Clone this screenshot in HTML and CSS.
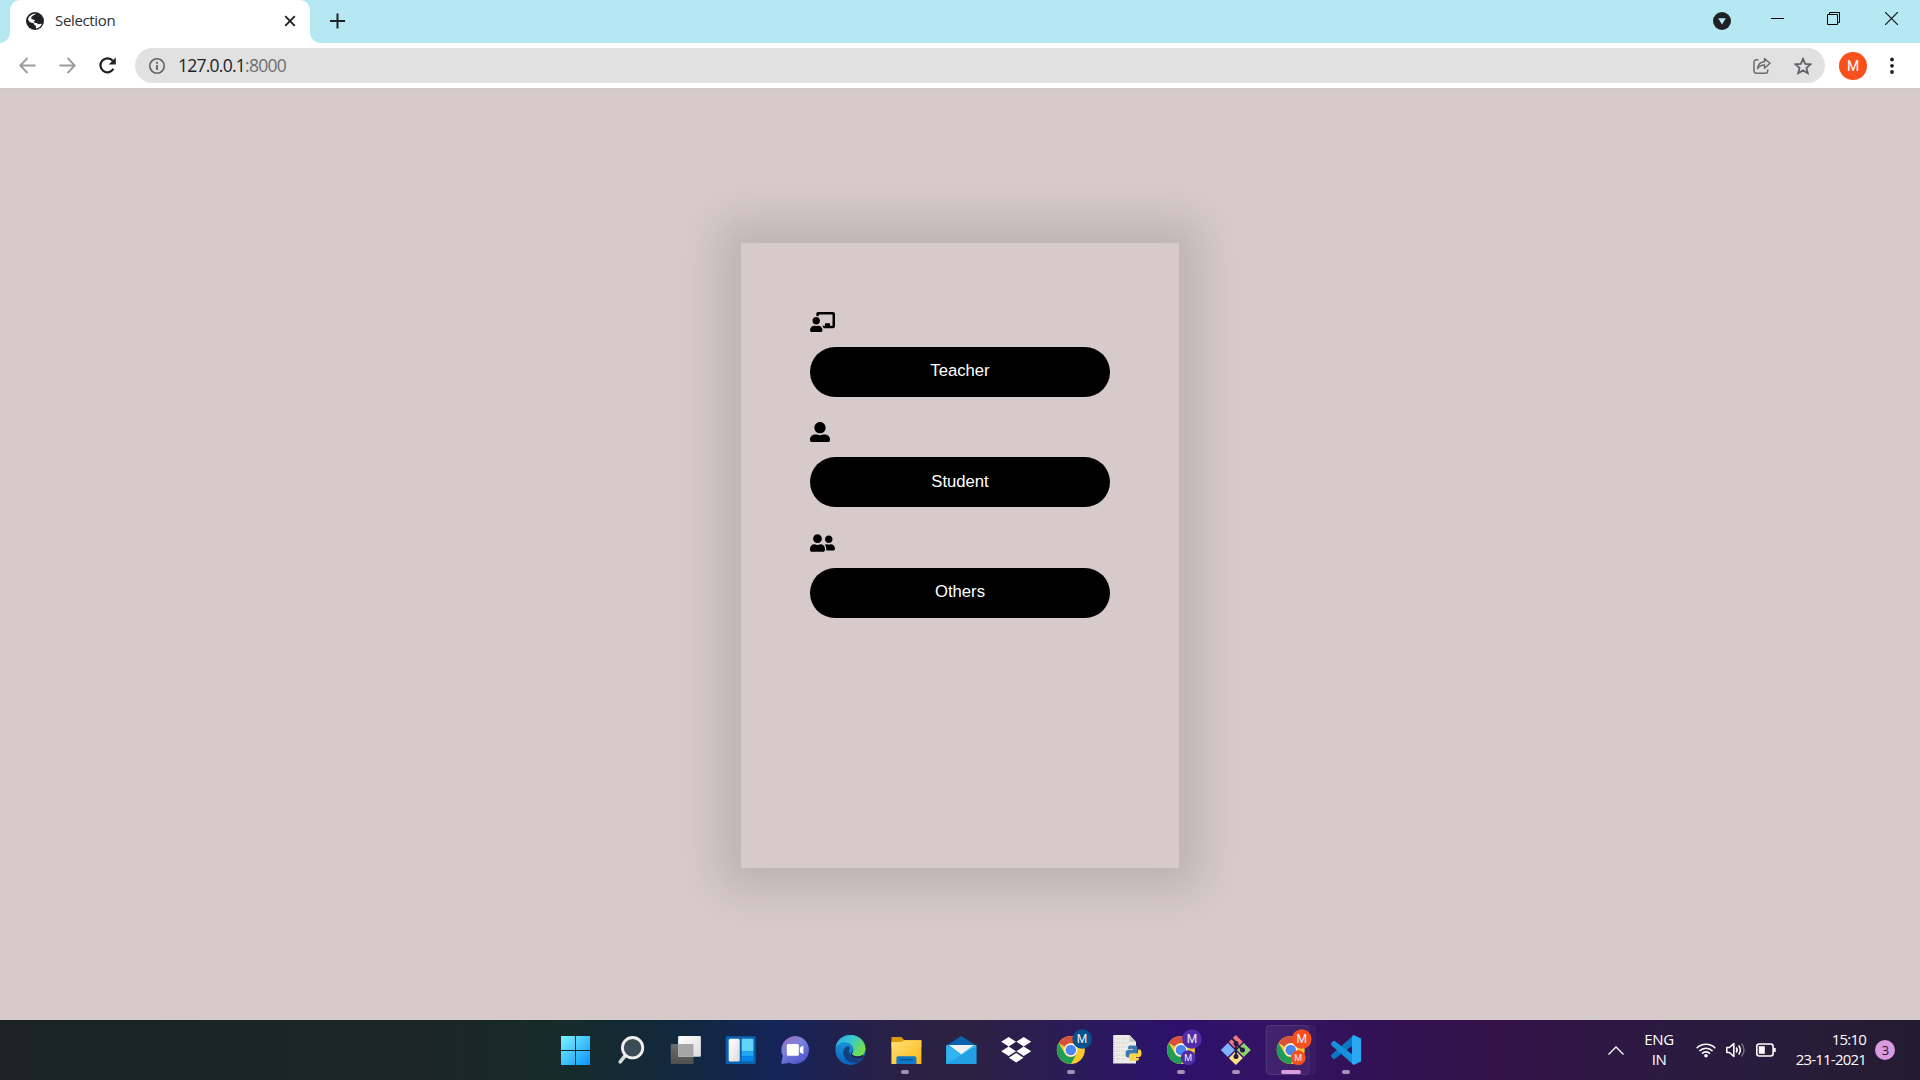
FILE: index.html
```
<!DOCTYPE html>
<html lang="en">
<head>
<meta charset="utf-8">
<title>Selection</title>
<link rel="stylesheet" href="styles.css">
</head>
<body>
<header class="tabstrip">
  <div class="tab">
    <svg class="globe" width="18" height="18" viewBox="0 0 18 18"><circle cx="9" cy="9" r="9" fill="#202124"/><path d="M10.200 1.800C8.500 2.500 6.600 3.800 6.500 5.500c0 1.500 1.300 1.700 2.600 1.800.6 1.500-.7 2-1.500 2.500l1.400 1.200c1.500-.2 2.700.2 2.900 1.200l4-.4c-.8 2.700-3.200 4.500-6 4.700v-2.700c-1.500-.2-2-1.200-1.900-2.400L3.500 10 2 7.500C2.600 4.300 6 1.500 10.200 1.800z" fill="#fff"/><path d="M5.200 5l3-2 1 1.300L7.500 6l3.300.2.8 1.800-1.400 1.200-2.400-1.500-2.300-.6z" fill="#202124"/></svg>
    <span class="tab-title">Selection</span>
    <svg class="tab-close" width="12" height="12" viewBox="0 0 12 12" stroke="#202124" stroke-width="1.900"><path d="M1.200 1.200l9.600 9.600M10.800 1.200l-9.600 9.600"/></svg>
  </div>
  <svg class="new-tab" width="16" height="16" viewBox="0 0 16 16" stroke="#202124" stroke-width="2"><path d="M8.500 .5v15M1 8h15"/></svg>
  <div class="window-controls">
    <svg class="tab-search" width="18" height="18" viewBox="0 0 18 18"><circle cx="9" cy="9" r="9" fill="#202124"/><path d="M5.200 6.300h7.600L9 12.500z" fill="#b5e8f3"/></svg>
    <svg width="13" height="13" viewBox="0 0 13 13" stroke="#000"><path d="M0 6.500h13"/></svg>
    <svg width="13" height="13" viewBox="0 0 13 13" fill="none" stroke="#000"><path d="M.5 2.500h10v10H.5zM2.500 2.500v-2h10v10h-2"/></svg>
    <svg width="13" height="13" viewBox="0 0 13 13" stroke="#111" stroke-width="1.200"><path d="M0 0l13 13M13 0L0 13"/></svg>
  </div>
</header>

<nav class="toolbar">
  <div class="nav-buttons">
    <svg width="18" height="18" viewBox="0 0 18 18" fill="none" stroke="#9b9b9b" stroke-width="1.800"><path d="M16.500 8.500H1.500M8.500 1L1.200 8.500 8.500 16"/></svg>
    <svg width="18" height="18" viewBox="0 0 18 18" fill="none" stroke="#9b9b9b" stroke-width="1.800"><path d="M.5 8.500h15M8.500 1l7.300 7.500L8.500 16"/></svg>
    <svg width="18" height="18" viewBox="0 0 18 18"><path d="M14.500 11.800A7 7 0 1 1 13.800 3.800" fill="none" stroke="#202124" stroke-width="2.200"/><path d="M16.800 .5v7H9.700z" fill="#202124"/></svg>
  </div>
  <div class="omnibox">
    <svg width="16" height="16" viewBox="0 0 16 16"><circle cx="8" cy="8" r="7.200" fill="none" stroke="#5f6368" stroke-width="1.600"/><path d="M8 7v5M8 3.800v1.900" stroke="#5f6368" stroke-width="1.800"/></svg>
    <span class="url">127.0.0.1<span class="port">:8000</span></span>
    <svg class="share" width="18" height="18" viewBox="0 0 18 18" fill="none" stroke="#6b6b6b" stroke-width="1.500"><path d="M5.500 2.800H3.200A2.200 2.200 0 0 0 1 5v9a2.200 2.200 0 0 0 2.200 2.200h9.300a2.200 2.200 0 0 0 2.200-2.200v-1.500"/><path d="M4.500 11.500C5 7.500 7.500 5 11.500 4.700V1.500L17 6.300l-5.500 4.900V8C8.500 8 6.300 9 4.500 11.500z" stroke-linejoin="round"/></svg>
    <svg width="18" height="18" viewBox="0 0 18 18" fill="none" stroke="#5f6368" stroke-width="1.800"><path d="M9 1.800l2.200 5 5.500.5-4.200 3.600 1.300 5.300L9 13.400l-4.800 2.800 1.300-5.300-4.200-3.600 5.500-.5z"/></svg>
  </div>
  <span class="avatar">M</span>
  <svg class="menu" width="4" height="18" viewBox="0 0 4 18" fill="#202124"><circle cx="2" cy="2.500" r="1.900"/><circle cx="2" cy="8.800" r="1.900"/><circle cx="2" cy="15" r="1.900"/></svg>
</nav>

<main class="page">
  <section class="card">
    <div class="choice">
      <svg width="25" height="20" viewBox="0 0 640 512"><path d="M208 352c-2.390 0-4.780.35-7.060 1.090C187.980 357.300 174.350 360 160 360c-14.350 0-27.980-2.700-40.950-6.910-2.280-.74-4.660-1.090-7.050-1.090C49.940 352-.33 402.480 0 464.620.14 490.880 21.730 512 48 512h224c26.270 0 47.860-21.120 48-47.380.33-62.140-49.940-112.620-112-112.620zm-48-32c53.020 0 96-42.980 96-96s-42.980-96-96-96-96 42.980-96 96 42.980 96 96 96zM592 0H208c-26.470 0-48 22.250-48 49.590V96c23.420 0 45.100 6.780 64 17.800V64h352v288h-64v-64H384v64h-76.240c19.100 16.690 33.120 38.730 39.690 64H592c26.470 0 48-22.250 48-49.590V49.590C640 22.250 618.470 0 592 0z"/></svg>
      <button class="choice-button">Teacher</button>
    </div>
    <div class="choice">
      <svg width="20" height="20" viewBox="0 0 512 512"><path d="M256 288c79.500 0 144-64.500 144-144S335.500 0 256 0 112 64.500 112 144s64.500 144 144 144zm128 32h-55.100c-22.200 10.200-46.900 16-72.900 16s-50.600-5.800-72.900-16H128C57.300 320 0 377.300 0 448v16c0 26.500 21.500 48 48 48h416c26.500 0 48-21.500 48-48v-16c0-70.700-57.300-128-128-128z"/></svg>
      <button class="choice-button">Student</button>
    </div>
    <div class="choice">
      <svg width="25" height="20" viewBox="0 0 640 512"><path d="M192 256c61.900 0 112-50.100 112-112S253.900 32 192 32 80 82.100 80 144s50.100 112 112 112zm76.800 32h-8.300c-20.800 10-43.900 16-68.500 16s-47.600-6-68.500-16h-8.300C51.600 288 0 339.600 0 403.200V432c0 26.500 21.500 48 48 48h288c26.500 0 48-21.500 48-48v-28.800c0-63.600-51.600-115.200-115.200-115.200zM480 256c53 0 96-43 96-96s-43-96-96-96-96 43-96 96 43 96 96 96zm48 32h-3.800c-13.900 4.800-28.600 8-44.200 8s-30.300-3.200-44.200-8H432c-20.400 0-39.200 5.900-55.700 15.400 24.400 26.300 39.700 61.200 39.700 99.800v38.400c0 2.200-.5 4.300-.6 6.400H592c26.500 0 48-21.500 48-48 0-61.900-50.100-112-112-112z"/></svg>
      <button class="choice-button">Others</button>
    </div>
  </section>
</main>

<footer class="taskbar">
  <svg width="0" height="0" class="defs">
    <defs>
      <linearGradient id="win" gradientUnits="userSpaceOnUse" x1="13" y1="16" x2="42" y2="45"><stop offset="0" stop-color="#7df3ff"/><stop offset="1" stop-color="#0a94fb"/></linearGradient>
      <linearGradient id="white" x1="0" y1="0" x2="1" y2="1"><stop offset="0" stop-color="#fff"/><stop offset="1" stop-color="#dcdcdc"/></linearGradient>
      <linearGradient id="grey" x1="0" y1="0" x2="0" y2="1"><stop offset="0" stop-color="#6c6c6c"/><stop offset="1" stop-color="#505050"/></linearGradient>
      <linearGradient id="chat" x1="0" y1="0" x2=".6" y2="1"><stop offset="0" stop-color="#a267ac"/><stop offset=".45" stop-color="#7b83e0"/><stop offset="1" stop-color="#5059c9"/></linearGradient>
      <linearGradient id="edgeTop" x1="0" y1="0" x2="1" y2=".5"><stop offset="0" stop-color="#2aa5e0"/><stop offset=".5" stop-color="#38c6cf"/><stop offset="1" stop-color="#72e04c"/></linearGradient>
      <linearGradient id="edgeLow" x1="0" y1="0" x2="0" y2="1"><stop offset="0" stop-color="#1ba0e2"/><stop offset="1" stop-color="#0c62bd"/></linearGradient>
      <linearGradient id="folder" x1="0" y1="0" x2="1" y2="1"><stop offset="0" stop-color="#ffe07a"/><stop offset="1" stop-color="#fdb813"/></linearGradient>
      <linearGradient id="mail" x1="0" y1="0" x2="1" y2="0"><stop offset="0" stop-color="#28a8ea"/><stop offset="1" stop-color="#36c5f0"/></linearGradient>
      <g id="chrome">
        <circle r="14" fill="#fbc82f"/>
        <path d="M-12.100-7A14 14 0 0 1 12.100-7H0A7 7 0 0 0-6 -3.500z" fill="#d9503f"/>
        <path d="M-12.100-7A14 14 0 0 0 0 14L6.100 3.500A7 7 0 0 1-6.100 3.500z" fill="#1f9d58"/>
        <circle r="6.500" fill="#fff"/><circle r="5.300" fill="#4a87f0"/>
      </g>
    </defs>
  </svg>
  <div class="apps">
    <div class="app"><svg viewBox="0 0 55 60"><path d="M13 16h14v14H13zM28 16h14v14H28zM13 31h14v14H13zM28 31h14v14H28z" fill="url(#win)"/></svg></div>
    <div class="app"><svg viewBox="0 0 55 60"><path d="M21.500 36.500l-4.300 5.300" stroke="#d8d8d8" stroke-width="3.600" stroke-linecap="round"/><circle cx="29.600" cy="27.700" r="10.200" fill="#3c4c57" stroke="#f0f0f0" stroke-width="2.800"/></svg></div>
    <div class="app"><svg viewBox="0 0 55 60"><rect x="12.800" y="24" width="22.700" height="20" rx="1" fill="url(#grey)"/><rect x="20.100" y="16" width="22.800" height="20.700" rx="1" fill="url(#white)"/><path d="M20.100 24h15.400v12.700H20.100z" fill="#a6a6a6"/></svg></div>
    <div class="app"><svg viewBox="0 0 55 60"><rect x="12.700" y="16.300" width="30" height="27.700" rx="1" fill="#0c62ad"/><rect x="15.700" y="18.700" width="11" height="22.900" rx="1.500" fill="url(#white)"/><path d="M28.700 18.700h11.700v12.500H28.700z" fill="#62d3fb"/><path d="M28.700 31.200h11.700v5H28.700z" fill="#22a7f2"/><path d="M28.700 36.200h11.700v5H28.700z" fill="#0787ea"/></svg></div>
    <div class="app"><svg viewBox="0 0 55 60"><path d="M27.500 16a14 14 0 1 1-6.200 26.800Q18 44 13.200 43.700L14.700 36A14 14 0 0 1 27.500 16z" fill="url(#chat)"/><rect x="18.800" y="24" width="12" height="11.800" rx="1.500" fill="#fff"/><path d="M31.800 27.500l3.600-2v8.800l-3.600-2z" fill="#fff"/></svg></div>
    <div class="app"><svg viewBox="0 0 55 60"><circle cx="27.500" cy="30" r="15" fill="url(#edgeLow)"/><path d="M12.600 28C13.500 20 19.500 15 27.500 15c9 0 15 6.700 15 13.400 0 5-3.600 8-8 8-3.500 0-5.500-1.200-5.500-2.200 0-.8 1.500-1.500 1.500-4.700 0-4-4-7.300-8.800-7.300-4 0-7 2-9.100 5.800z" fill="url(#edgeTop)"/><path d="M23 27c-3 2.500-3.500 7-1.200 10.800 3 5 9 6.200 13.600 4.900 2.600-1 4.500-3 5.700-4.900-5 3-10.600 1.800-12.400-1.300C27 33.700 24.500 31.500 27 27.500 26 26 24 26 23 27z" fill="#143f80"/><path d="M30.300 31q-2 2.600-1 3.600c2 2.200 7 2.300 10.200.5l1.500 1.500-1.500 1.400c-4 1.500-9 .6-10.700-1.500-1.600-2-1-4.500 1.500-5.500z" fill="#20204a"/></svg></div>
    <div class="app"><svg viewBox="0 0 55 60"><path d="M12.400 18q0-1 1-1h9l2.800 3h16q1.200 0 1.200 1v6h-30z" fill="#dc9b09"/><path d="M12.400 22h10l3-1.800h17V44h-30z" fill="url(#folder)"/><path d="M17.400 44v-6q0-1.700 1.700-1.700h16.600q1.700 0 1.700 1.700v6z" fill="#1179c9"/><path d="M21 39.700h13" stroke="#09508f" stroke-width="1.200"/></svg><i class="running"></i></div>
    <div class="app"><svg viewBox="0 0 55 60"><path d="M12.300 25.500l15-9.500 15 9.500z" fill="#0b62ad"/><path d="M12.300 25h30v19h-30z" fill="url(#mail)"/><path d="M12.300 44l30-18v18z" fill="#229fe5"/><path d="M12.300 44V26l15 9z" fill="#31b5ee"/><path d="M14.800 25h25l-12.500 9.200z" fill="#f2f2f2"/></svg></div>
    <div class="app"><svg viewBox="0 0 55 60" fill="#fff"><path d="M19.700 17l7.300 4.700-7.300 4.700-7.500-4.700zM34.700 17l7.500 4.700-7.500 4.700-7.300-4.700zM19.700 26.500l7.300 4.700-7.300 4.700-7.500-4.700zM34.700 26.500l7.500 4.700-7.500 4.700-7.300-4.700zM27.200 33l7.300 4.700-7.300 4.700-7.400-4.700z"/></svg></div>
    <div class="app"><svg viewBox="0 0 55 60"><use href="#chrome" x="26.800" y="30"/><circle cx="38.100" cy="19" r="9.800" fill="#07528c"/><text class="badge-lg" x="38.100" y="23.200">M</text></svg><i class="running"></i></div>
    <div class="app"><svg viewBox="0 0 55 60"><path d="M14 15h16.500l6.500 7v21.500H14z" fill="#ecebe8"/><path d="M30.500 15l6.500 7h-6.500z" fill="#c9c9c6"/><path d="M17 19h12M17 23h12M17 27h16M17 31h10M17 35h9M17 39h10" stroke="#d6d6d6" stroke-dasharray="4 1.500"/><path d="M14.700 15v28" stroke="#777" stroke-dasharray="1 1.300"/><path d="M31 25.500h5q2.300 0 2.300 2.200v4q0 1.800-1.800 1.800h-4.200q-2 0-2 2v2h-1.700q-2 0-2-4.300 0-3.200 2.500-3.200h5v-.8h-5v-1.500q0-2.200 1.900-2.200z" fill="#3a79ac"/><path d="M37.700 40.800h-5q-2.300 0-2.300-2.200v-3q0-1.800 1.800-1.800h4.500q2.300 0 2.300-2.300v-2h1.500q2 0 2 4.300 0 3.200-2.500 3.200h-5v.8h5v1q0 2-2.300 2z" fill="#ffd143"/></svg></div>
    <div class="app"><svg viewBox="0 0 55 60"><use href="#chrome" x="26.900" y="30"/><circle cx="37.900" cy="19" r="9.800" fill="#512da8"/><text class="badge-lg" x="37.900" y="23.200">M</text><circle cx="34.200" cy="37.700" r="7.400" fill="#512da8"/><text class="badge-sm" x="34.200" y="41">M</text></svg><i class="running"></i></div>
    <div class="app"><svg viewBox="0 0 55 60"><path d="M26.800 15l7 7-7 7-7-7z" fill="#f3797e"/><path d="M34.800 23l7 7-7 7-7-7z" fill="#8ed36a"/><path d="M18.800 23l7 7-7 7-7-7z" fill="#80b3ff"/><path d="M26.800 31l7 7-7 7-7-7z" fill="#ffe184"/><path d="M22 17.500l5 5v14M27 23.500l6.500 6.500" stroke="#241c44" stroke-width="1.900" fill="none"/><circle cx="27" cy="23.500" r="2.500" fill="#241c44"/><circle cx="27" cy="36.500" r="2.500" fill="#241c44"/><circle cx="33.500" cy="30" r="2.500" fill="#241c44"/></svg><i class="running"></i></div>
    <div class="app"><svg viewBox="0 0 55 60"><rect x="2.200" y="5.500" width="49" height="49" rx="4" fill="#fff" fill-opacity=".03" stroke="#fff" stroke-opacity=".06"/><rect x="2.200" y="5.500" width="43" height="49" rx="4" fill="#fff" fill-opacity=".04" stroke="#fff" stroke-opacity=".07"/><use href="#chrome" x="26.700" y="30"/><circle cx="37.800" cy="19" r="9.800" fill="#f4511e"/><text class="badge-lg" x="37.800" y="23.200">M</text><circle cx="34.200" cy="37.700" r="7.400" fill="#f4511e"/><text class="badge-sm" x="34.200" y="41">M</text></svg><i class="running active"></i></div>
    <div class="app"><svg viewBox="0 0 55 60"><path d="M34.500 15.300v9.500L15 39.500 12.100 37v-2z" fill="#0a78c4"/><path d="M34.500 44.700v-9.500L15 20.500 12.100 23v2z" fill="#1591dc"/><path d="M34.500 15l7.600 3.500v23L34.500 45l-1.500-1.500V16.500z" fill="#29a9f3"/></svg><i class="running"></i></div>
  </div>
  <div class="tray">
    <svg class="chevron" width="16" height="9" viewBox="0 0 16 9" fill="none" stroke="#fff" stroke-width="1.300"><path d="M.5 8.500L8 1l7.500 7.500"/></svg>
    <div class="lang">ENG<br>IN</div>
    <svg class="wifi" width="20" height="16" viewBox="0 0 20 16" fill="none" stroke="#fff" stroke-width="1.600"><path d="M.7 6.200a13 13 0 0 1 18.600 0M3.400 9a9.300 9.300 0 0 1 13.200 0M6 11.600a5.600 5.600 0 0 1 8 0"/><circle cx="10" cy="13.700" r="1.800" fill="#fff" stroke="none"/></svg>
    <svg class="sound" width="20" height="16" viewBox="0 0 20 16" fill="none" stroke="#fff" stroke-width="1.600"><path d="M.8 5.500h2.700L7.800 1.500v13L3.500 10.500H.8z" stroke-linejoin="round"/><path d="M10.200 5.500q1.800 2.500 0 5M12.700 3.500q3.300 4.500 0 9"/><path d="M15.500 1.500q5 6.500 0 13" stroke="#76687f"/></svg>
    <svg width="20" height="14" viewBox="0 0 20 14" fill="none" stroke="#fff" stroke-width="1.600"><rect x=".8" y="1" width="16.300" height="12" rx="2.500"/><rect x="2.800" y="3.200" width="6" height="7.600" fill="#fff" stroke="none"/><path d="M18.700 5v4" stroke-width="2"/></svg>
    <div class="clock">15:10<br>23-11-2021</div>
    <span class="count">3</span>
  </div>
</footer>
</body>
</html>
```
FILE: styles.css
```
* { box-sizing: border-box; }

body {
  margin: 0;
  width: 1920px;
  height: 1080px;
  overflow: hidden;
  display: flex;
  flex-direction: column;
  background: #d6caca;
  font-family: "Open Sans", "Noto Sans", sans-serif;
}

svg { display: block; flex: none; }

/* Tab strip */
.tabstrip {
  display: flex;
  height: 43px;
  padding-left: 10px;
  background: #b5e8f3;
}

.tab {
  position: relative;
  display: flex;
  align-items: center;
  width: 300px;
  height: 43px;
  padding: 0 14px 1px 16px;
  background: #fff;
  border-radius: 10px 10px 0 0;
}

.tab::before,
.tab::after {
  content: "";
  position: absolute;
  bottom: 0;
  width: 10px;
  height: 10px;
}

.tab::before {
  left: -10px;
  background: radial-gradient(circle at 0 0, transparent 9.5px, #fff 10px);
}

.tab::after {
  right: -10px;
  background: radial-gradient(circle at 100% 0, transparent 9.5px, #fff 10px);
}

.tab-title {
  flex: 1;
  margin-left: 11px;
  padding-bottom: 2px;
  font-size: 15px;
  line-height: 40px;
  letter-spacing: -0.35px;
  color: #2d3033;
}

.new-tab { margin: 13px 0 0 19px; }

.window-controls {
  display: flex;
  align-items: flex-start;
  gap: 45px;
  margin-left: auto;
  padding: 12px 22px 0 0;
}

.window-controls .tab-search { margin-right: -5px; }
.window-controls svg:nth-child(3) { margin-left: -2px; }

/* Address bar */
.toolbar {
  display: flex;
  align-items: center;
  height: 46px;
  padding: 0 26px 0 19px;
  background: #fff;
  border-bottom: 1px solid #cdc9c9;
}

.nav-buttons {
  display: flex;
  gap: 22px;
  width: 116px;
}

.omnibox {
  display: flex;
  align-items: center;
  width: 1690px;
  height: 35px;
  padding: 0 13.500px 0 14px;
  background: #e1e1e1;
  border-radius: 18px;
}

.url {
  flex: 1;
  margin-left: 13px;
  padding-bottom: 1px;
  font-size: 17.500px;
  letter-spacing: -0.75px;
  color: #202124;
}

.port { color: #6d6f72; }
.share { margin-right: 22.500px; }

.avatar {
  width: 28px;
  height: 28px;
  margin-left: 14px;
  border-radius: 50%;
  background: #f9511d;
  color: #fff;
  font: 14px/28px Roboto, sans-serif;
  text-align: center;
}

.menu { margin-left: auto; }

/* Page */
.page {
  flex: 1;
  padding-top: 154px;
}

.card {
  display: flex;
  flex-direction: column;
  gap: 25px;
  width: 438px;
  height: 625px;
  margin: 0 auto;
  padding: 68.500px 69px;
  background: #d6caca;
  box-shadow: 0 0 40px 20px rgba(0, 12, 8, 0.125);
}

.choice {
  display: flex;
  flex-direction: column;
  gap: 15.450px;
}

.choice:last-child { margin-top: 0.150px; }

.choice-button {
  width: 300px;
  height: 50px;
  padding: 0 0 1px;
  border: 0;
  border-radius: 25px;
  background: #000;
  color: #fff;
  font: 16.670px "Liberation Sans", Arial, sans-serif;
}

/* Taskbar */
.taskbar {
  display: flex;
  height: 60px;
  padding-left: 548px;
  background: linear-gradient(90deg, #1b2324 0, #1c2624 400px, #162b2b 570px, #12283d 680px, #14245a 780px, #26204a 860px, #2c2140 960px, #2b1a5a 1080px, #2c116c 1180px, #341364 1270px, #331152 1400px, #351349 1500px, #2b1a41 1660px, #291c3b 1780px, #231c30 1920px);
  color: #fff;
}

.defs { position: absolute; }

.apps {
  display: grid;
  grid-template-columns: repeat(15, 55.100px);
}

.app {
  position: relative;
  height: 60px;
}

.app svg { width: 55px; height: 60px; }

.running {
  position: absolute;
  left: 22.800px;
  bottom: 6px;
  width: 8px;
  height: 4px;
  border-radius: 2px;
  background: #a295b4;
}

.running.active {
  left: 16.800px;
  width: 20px;
  background: #d99ae0;
}

.badge-lg,
.badge-sm {
  fill: #f2edf8;
  font-family: Roboto, sans-serif;
  font-size: 12px;
  text-anchor: middle;
}

.badge-sm { font-size: 9px; }

.tray {
  display: flex;
  align-items: center;
  margin-left: auto;
  padding-right: 25px;
  font-size: 15px;
  line-height: 20px;
  letter-spacing: -0.8px;
}

.lang {
  width: 44px;
  margin: 0 15px 3px 13px;
  letter-spacing: -0.4px;
  text-align: center;
}

.wifi { margin-right: 10px; }
.sound { margin-right: 10px; }

.clock {
  width: 90px;
  margin-bottom: 3px;
  text-align: right;
}

.count {
  width: 20px;
  height: 20px;
  margin-left: 9px;
  border-radius: 50%;
  background: #d99ae0;
  color: #221328;
  font-size: 13px;
  text-align: center;
}
```
